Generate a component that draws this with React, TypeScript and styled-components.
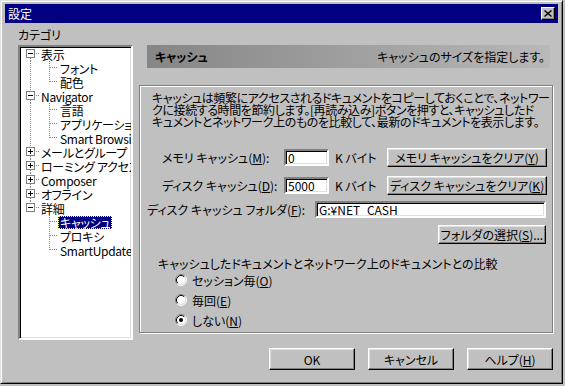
import React from 'react';
import styled, { createGlobalStyle } from 'styled-components';

const GlobalStyle = createGlobalStyle`
  html, body {
    margin: 0;
    padding: 0;
    background: #c0c0c0;
  }
  body {
    font-family: "Noto Sans CJK JP", "Noto Sans", sans-serif;
    font-size: 12px;
    color: #000;
    font-feature-settings: "palt";
  }
`;

const Window = styled.div`
  box-sizing: border-box;
  width: 563px;
  height: 384px;
  padding: 3px 4px 4px 4px;
  background: #c0c0c0;
  border: 1px solid;
  border-color: #dfdfdf #000 #000 #dfdfdf;
  box-shadow: inset 1px 1px #fff, inset -1px -1px #808080;
  display: flex;
  flex-direction: column;
`;

const TitleBar = styled.div`
  height: 19px;
  background: #000080;
  color: #fff;
  display: flex;
  align-items: center;
  justify-content: space-between;
  padding: 0 3px;
  line-height: 19px;
`;

const CloseButton = styled.div`
  box-sizing: border-box;
  width: 14px;
  height: 13px;
  background: #c0c0c0;
  border: 1px solid;
  border-color: #fff #000 #000 #fff;
  box-shadow: inset -1px -1px #808080;
  display: flex;
  align-items: center;
  justify-content: center;
`;

const Body = styled.div`
  padding: 5px 0 0 13px;
  display: flex;
  flex-direction: column;
`;

const MainGrid = styled.div`
  display: grid;
  grid-template-columns: 115px 414px;
  grid-template-rows: 17px 295px;
  column-gap: 6px;
`;

const CategoryLabel = styled.div`
  line-height: 14px;
`;

const TreeBox = styled.div`
  grid-column: 1;
  grid-row: 2;
  box-sizing: border-box;
  height: 295px;
  background: #fff;
  border: 2px solid;
  border-color: #808080 #fff #fff #808080;
  box-shadow: inset 1px 1px #000, inset -1px -1px #dfdfdf;
  overflow: hidden;
`;

const TreeRow = styled.div`
  display: flex;
  height: 14px;
  align-items: center;
  white-space: nowrap;
  line-height: 14px;
`;

const TreeLabel = styled.span<{ $selected?: boolean; $root?: boolean }>`
  margin-left: ${(p) => (p.$root ? '-1px' : '0')};
  padding: 0 2px;
  line-height: 13px;
  letter-spacing: -0.3px;
  background: ${(p) => (p.$selected ? '#000080' : 'transparent')};
  color: ${(p) => (p.$selected ? '#fff' : '#000')};
  outline: ${(p) => (p.$selected ? '1px dotted #ffff80' : 'none')};
  outline-offset: -1px;
`;

const Panel = styled.div`
  grid-column: 2;
  grid-row: 2;
  display: flex;
  flex-direction: column;
`;

const Header = styled.div`
  height: 23px;
  margin: 0 3px 0 8px;
  padding: 0 5px 0 8px;
  background: linear-gradient(to right, #868686, #b8b8b8);
  display: flex;
  align-items: center;
  justify-content: space-between;
`;

const HeaderTitle = styled.span`
  font-weight: bold;
`;

const GroupBox = styled.div`
  box-sizing: border-box;
  margin-top: 17px;
  height: 248px;
  border: 1px solid #808080;
  box-shadow: inset 1px 1px #fff, 1px 1px #fff;
  padding: 6px 6px 0 7px;
  display: flex;
  flex-direction: column;
`;

const Description = styled.p`
  margin: 0 0 0 5px;
  line-height: 12px;
  white-space: nowrap;
  letter-spacing: -0.4px;
`;

const CacheGrid = styled.div`
  margin: 20px 0 0 15px;
  display: grid;
  grid-template-columns: 122px 45px 58px 160px;
  grid-auto-rows: 19px;
  row-gap: 9px;
  align-items: center;
`;

const Unit = styled.span`
  padding-left: 6px;
`;

const Field = styled.input<{ $w?: number }>`
  box-sizing: border-box;
  width: ${(p) => (p.$w ? `${p.$w}px` : '100%')};
  height: 17px;
  margin: 0;
  padding: 0 2px;
  font: inherit;
  font-feature-settings: "palt";
  color: #000;
  background: #fff;
  border: 2px solid;
  border-color: #808080 #fff #fff #808080;
  box-shadow: inset 1px 1px #000, inset -1px -1px #dfdfdf;
  outline: none;
`;

const Button = styled.button<{ $w: number; $h: number }>`
  box-sizing: border-box;
  width: ${(p) => p.$w}px;
  height: ${(p) => p.$h}px;
  margin: 0;
  padding: 0;
  font: inherit;
  font-feature-settings: "palt";
  color: #000;
  background: #c0c0c0;
  border: 1px solid;
  border-color: #fff #000 #000 #fff;
  box-shadow: inset -1px -1px #808080, inset 1px 1px #dfdfdf;
  white-space: nowrap;
`;

const FolderRow = styled.div`
  margin-top: 6px;
  display: flex;
  align-items: center;
  height: 17px;
`;

const FolderLabel = styled.span`
  width: 168px;
  flex: none;
`;

const RightRow = styled.div`
  margin-top: 7px;
  display: flex;
  justify-content: flex-end;
`;

const CompareLabel = styled.div`
  margin: 13px 0 0 11px;
  line-height: 14px;
`;

const RadioList = styled.div`
  margin: -1px 0 0 28px;
  display: flex;
  flex-direction: column;
`;

const RadioRow = styled.label`
  height: 20px;
  display: flex;
  align-items: center;
  gap: 5px;
`;

const ButtonBar = styled.div`
  width: 535px;
  margin-top: 8px;
  display: flex;
  justify-content: flex-end;
  gap: 13px;
`;

const dots = { stroke: '#808080', strokeDasharray: '1 1', strokeWidth: 1 };

const RootGuide = ({ expanded, up, down }: { expanded: boolean; up: boolean; down: boolean }) => (
  <svg width="20" height="14" viewBox="0 0 20 14" style={{ flex: 'none' }}>
    {up && <line x1="10.5" y1="0" x2="10.5" y2="2" {...dots} />}
    {down && <line x1="10.5" y1="11" x2="10.5" y2="14" {...dots} />}
    <line x1="16" y1="6.5" x2="20" y2="6.5" {...dots} />
    <rect x="6.5" y="2.5" width="8" height="8" fill="#fff" stroke="#808080" />
    <line x1="8" y1="6.5" x2="13" y2="6.5" stroke="#000" />
    {!expanded && <line x1="10.5" y1="4" x2="10.5" y2="9" stroke="#000" />}
  </svg>
);

const ChildGuide = ({ rootContinues, last }: { rootContinues: boolean; last: boolean }) => (
  <>
    <svg width="20" height="14" viewBox="0 0 20 14" style={{ flex: 'none' }}>
      {rootContinues && <line x1="10.5" y1="0" x2="10.5" y2="14" {...dots} />}
    </svg>
    <svg width="18" height="14" viewBox="0 0 18 14" style={{ flex: 'none' }}>
      <line x1="9.5" y1="0" x2="9.5" y2={last ? 7 : 14} {...dots} />
      <line x1="10" y1="6.5" x2="18" y2="6.5" {...dots} />
    </svg>
  </>
);

const Radio = ({ checked }: { checked?: boolean }) => (
  <svg width="12" height="12" viewBox="0 0 12 12" style={{ flex: 'none' }}>
    <circle cx="6" cy="6" r="5" fill="#fff" />
    <path d="M2.11 9.89 A5.5 5.5 0 0 1 9.89 2.11" fill="none" stroke="#808080" />
    <path d="M9.89 2.11 A5.5 5.5 0 0 1 2.11 9.89" fill="none" stroke="#fff" />
    <path d="M2.82 9.18 A4.5 4.5 0 0 1 9.18 2.82" fill="none" stroke="#000" />
    <path d="M9.18 2.82 A4.5 4.5 0 0 1 2.82 9.18" fill="none" stroke="#dfdfdf" />
    {checked && <circle cx="6" cy="6" r="2" fill="#000" />}
  </svg>
);

type Node = { label: string; children?: string[] };

const tree: Node[] = [
  { label: '表示', children: ['フォント', '配色'] },
  { label: 'Navigator', children: ['言語', 'アプリケーション', 'Smart Browsing'] },
  { label: 'メールとグループ' },
  { label: 'ローミング アクセス' },
  { label: 'Composer' },
  { label: 'オフライン' },
  { label: '詳細', children: ['キャッシュ', 'プロキシ', 'SmartUpdate'] },
];

const selected = 'キャッシュ';

const App = () => {
  return (
    <>
      <GlobalStyle />
      <Window>
        <TitleBar>
          <span>設定</span>
          <CloseButton>
            <svg width="8" height="7" viewBox="0 0 8 7">
              <path d="M0.5 0.5 L7.5 6.5 M7.5 0.5 L0.5 6.5" stroke="#000" strokeWidth="1.4" />
            </svg>
          </CloseButton>
        </TitleBar>
        <Body>
          <MainGrid>
            <CategoryLabel>カテゴリ</CategoryLabel>
            <TreeBox>
              {tree.map((node, i) => {
                const isFirst = i === 0;
                const isLast = i === tree.length - 1;
                const kids = node.children || [];
                return (
                  <React.Fragment key={node.label}>
                    <TreeRow>
                      <RootGuide expanded={kids.length > 0} up={!isFirst} down={!isLast} />
                      <TreeLabel $root>{node.label}</TreeLabel>
                    </TreeRow>
                    {kids.map((kid, k) => (
                      <TreeRow key={kid}>
                        <ChildGuide rootContinues={!isLast} last={k === kids.length - 1} />
                        <TreeLabel $selected={kid === selected}>{kid}</TreeLabel>
                      </TreeRow>
                    ))}
                  </React.Fragment>
                );
              })}
            </TreeBox>
            <Panel>
              <Header>
                <HeaderTitle>キャッシュ</HeaderTitle>
                <span>キャッシュのサイズを指定します。</span>
              </Header>
              <GroupBox>
                <Description>
                  キャッシュは頻繁にアクセスされるドキュメントをコピーしておくことで、ネットワー
                  <br />
                  クに接続する時間を節約します。[再読み込み]ボタンを押すと、キャッシュしたド
                  <br />
                  キュメントとネットワーク上のものを比較して、最新のドキュメントを表示します。
                </Description>
                <CacheGrid>
                  <span>
                    メモリ キャッシュ(<u>M</u>):
                  </span>
                  <Field $w={45} readOnly value="0" />
                  <Unit>K バイト</Unit>
                  <Button $w={160} $h={19}>
                    メモリ キャッシュをクリア(<u>Y</u>)
                  </Button>
                  <span>
                    ディスク キャッシュ(<u>D</u>):
                  </span>
                  <Field $w={45} readOnly value="5000" />
                  <Unit>K バイト</Unit>
                  <Button $w={160} $h={19}>
                    ディスク キャッシュをクリア(<u>K</u>)
                  </Button>
                </CacheGrid>
                <FolderRow>
                  <FolderLabel>
                    ディスク キャッシュ フォルダ(<u>F</u>):
                  </FolderLabel>
                  <Field readOnly value="G:¥NET_CASH" />
                </FolderRow>
                <RightRow>
                  <Button $w={108} $h={19}>
                    フォルダの選択(<u>S</u>)...
                  </Button>
                </RightRow>
                <CompareLabel>キャッシュしたドキュメントとネットワーク上のドキュメントとの比較</CompareLabel>
                <RadioList>
                  <RadioRow>
                    <Radio />
                    <span>
                      セッション毎(<u>O</u>)
                    </span>
                  </RadioRow>
                  <RadioRow>
                    <Radio />
                    <span>
                      毎回(<u>E</u>)
                    </span>
                  </RadioRow>
                  <RadioRow>
                    <Radio checked />
                    <span>
                      しない(<u>N</u>)
                    </span>
                  </RadioRow>
                </RadioList>
              </GroupBox>
            </Panel>
          </MainGrid>
          <ButtonBar>
            <Button $w={86} $h={22}>OK</Button>
            <Button $w={86} $h={22}>キャンセル</Button>
            <Button $w={86} $h={22}>
              ヘルプ(<u>H</u>)
            </Button>
          </ButtonBar>
        </Body>
      </Window>
    </>
  );
};

export default App;
